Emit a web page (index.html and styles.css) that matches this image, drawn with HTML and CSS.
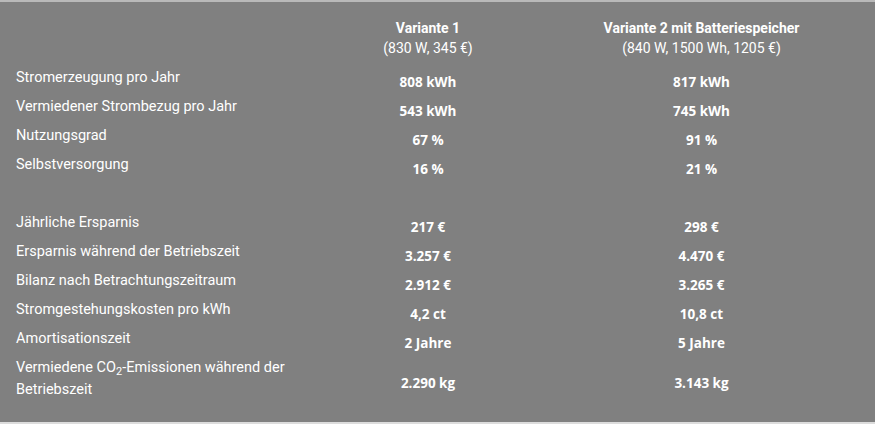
FILE: index.html
```html
<!DOCTYPE html>
<html lang="de">
<head>
<meta charset="utf-8">
<title>Vergleich</title>
<link rel="stylesheet" href="styles.css">
</head>
<body>
<div class="sheet">
  <div class="row head">
    <div class="label"></div>
    <div class="v1"><strong>Variante 1</strong><br>(830 W, 345 €)</div>
    <div class="v2"><strong>Variante 2 mit Batteriespeicher</strong><br>(840 W, 1500 Wh, 1205 €)</div>
  </div>
  <div class="row"><div class="label">Stromerzeugung pro Jahr</div><div class="val v1">808 kWh</div><div class="val v2">817 kWh</div></div>
  <div class="row"><div class="label">Vermiedener Strombezug pro Jahr</div><div class="val v1">543 kWh</div><div class="val v2">745 kWh</div></div>
  <div class="row"><div class="label">Nutzungsgrad</div><div class="val v1">67 %</div><div class="val v2">91 %</div></div>
  <div class="row"><div class="label">Selbstversorgung</div><div class="val v1">16 %</div><div class="val v2">21 %</div></div>
  <div class="row spacer"><div class="label">&nbsp;</div></div>
  <div class="row"><div class="label">Jährliche Ersparnis</div><div class="val v1">217 €</div><div class="val v2">298 €</div></div>
  <div class="row"><div class="label">Ersparnis während der Betriebszeit</div><div class="val v1">3.257 €</div><div class="val v2">4.470 €</div></div>
  <div class="row"><div class="label">Bilanz nach Betrachtungszeitraum</div><div class="val v1">2.912 €</div><div class="val v2">3.265 €</div></div>
  <div class="row"><div class="label">Stromgestehungskosten pro kWh</div><div class="val v1">4,2 ct</div><div class="val v2">10,8 ct</div></div>
  <div class="row"><div class="label">Amortisationszeit</div><div class="val v1">2 Jahre</div><div class="val v2">5 Jahre</div></div>
  <div class="row"><div class="label">Vermiedene CO<sub>2</sub>-Emissionen während der<br>Betriebszeit</div><div class="val v1">2.290 kg</div><div class="val v2">3.143 kg</div></div>
</div>
</body>
</html>
```

FILE: styles.css
```css
html, body {
  margin: 0;
  padding: 0;
  background: #808080;
}
.sheet {
  box-sizing: border-box;
  height: 424px;
  background: #808080;
  border-top: 2px solid #b9b9b9;
  border-bottom: 2px solid #dcdcdc;
  padding: 16px 0 0 16px;
  color: #ffffff;
  font-family: Roboto, "Liberation Sans", sans-serif;
}
.row {
  display: grid;
  grid-template-columns: 339px 146px 1fr;
  align-items: center;
}
.label {
  font-size: 14.5px;
  line-height: 22px;
  padding: 4px 0 3px;
}
.label sub {
  font-size: 11px;
  line-height: 0;
  vertical-align: -3px;
}
.v1, .v2 {
  text-align: center;
}
.v2 {
  padding-left: 27px;
}
.head {
  margin-bottom: 5px;
  align-items: start;
}
.head .v1, .head .v2 {
  font-size: 14px;
  line-height: 20px;
}
.head strong {
  font-weight: 700;
}
.val {
  font-family: "Open Sans", Roboto, sans-serif;
  font-size: 13.5px;
  font-weight: 700;
  line-height: 20px;
  padding-top: 9px;
}
```
